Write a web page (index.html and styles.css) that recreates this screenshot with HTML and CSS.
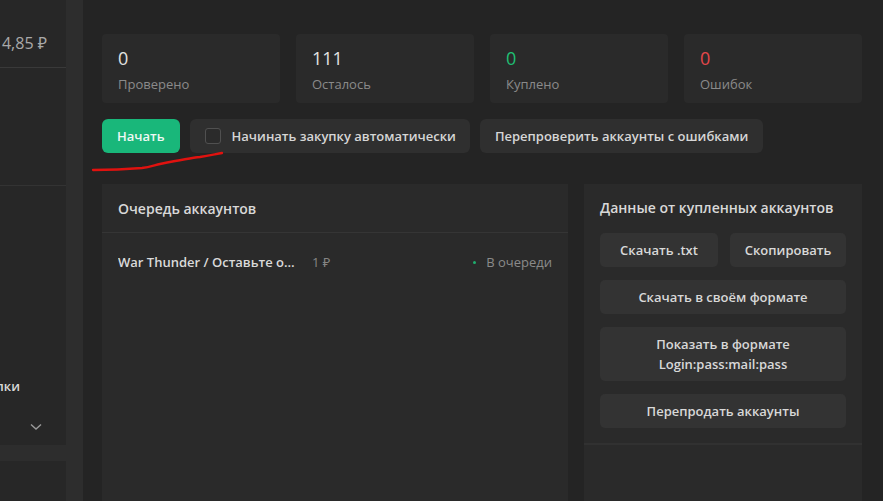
FILE: index.html
```html
<!DOCTYPE html>
<html>
<head>
    <title>Закупка аккаунтов</title>
    <link rel="stylesheet" href="styles.css">
</head>
<body>
    <div class="sidebar">
        <div class="side-card">
            <div class="side-inner">
                <div class="balance">
                    <span class="balance-label">Баланс</span>
                    <span class="balance-value">4,85 ₽</span>
                </div>
                <div class="side-block"></div>
                <div class="side-label">Режим закупки</div>
                <div class="side-select">
                    <svg width="12" height="8" viewBox="0 0 12 8"><path d="M1 1.5 L6 6 L11 1.5" fill="none" stroke="#9a9a9a" stroke-width="1.4"/></svg>
                </div>
            </div>
        </div>
        <div class="side-card side-card-bottom"></div>
    </div>

    <div class="main">
        <div class="stats">
            <div class="stat">
                <div class="stat-num">0</div>
                <div class="stat-label">Проверено</div>
            </div>
            <div class="stat">
                <div class="stat-num">111</div>
                <div class="stat-label">Осталось</div>
            </div>
            <div class="stat">
                <div class="stat-num green">0</div>
                <div class="stat-label">Куплено</div>
            </div>
            <div class="stat">
                <div class="stat-num red">0</div>
                <div class="stat-label">Ошибок</div>
            </div>
        </div>

        <div class="actions">
            <button class="btn btn-green">Начать</button>
            <label class="btn btn-check">
                <span class="checkbox"></span>
                Начинать закупку автоматически
            </label>
            <button class="btn">Перепроверить аккаунты с ошибками</button>
        </div>

        <div class="panels">
            <div class="panel queue">
                <div class="panel-head">Очередь аккаунтов</div>
                <div class="queue-row">
                    <span class="queue-title">War Thunder / Оставьте отзыв</span>
                    <span class="queue-price">1 ₽</span>
                    <span class="queue-status"><span class="dot"></span>В очереди</span>
                </div>
            </div>

            <div class="right-col">
                <div class="panel data">
                    <div class="data-title">Данные от купленных аккаунтов</div>
                    <div class="data-buttons">
                        <button class="btn-data">Скачать .txt</button>
                        <button class="btn-data">Скопировать</button>
                        <button class="btn-data wide">Скачать в своём формате</button>
                        <button class="btn-data wide">Показать в формате<br>Login:pass:mail:pass</button>
                        <button class="btn-data wide">Перепродать аккаунты</button>
                    </div>
                </div>
                <div class="panel data-bottom"></div>
            </div>
        </div>
    </div>

    <!-- red hand-drawn mark over the screenshot -->
    <svg class="mark" width="883" height="501" viewBox="0 0 883 501">
        <path d="M93 170 C110 170 130 169 142 168 C150 167 155 165 160 164 C175 161 190 158 200 157 C210 155 217 154 222 153" fill="none" stroke="#e0120f" stroke-width="2.3" stroke-linecap="round"/>
    </svg>
</body>
</html>
```

FILE: styles.css
```css
body {
    margin: 0;
    height: 501px;
    overflow: hidden;
    display: flex;
    background-color: #2d2d2d;
    font-family: "Open Sans", "Noto Sans", sans-serif;
    color: #dcdcdc;
}
.sidebar {
    width: 66px;
    flex-shrink: 0;
    display: flex;
    flex-direction: column;
    gap: 16px;
}
.side-card {
    background-color: #272727;
    height: 445px;
    display: flex;
    justify-content: flex-end;
    overflow: hidden;
}
.side-card-bottom {
    flex: 1;
}
.side-inner {
    width: 240px;
    flex-shrink: 0;
}
.balance {
    height: 68px;
    box-sizing: border-box;
    border-bottom: 1px solid #393939;
    display: flex;
    align-items: flex-end;
    justify-content: space-between;
    padding: 0 19px 13px 16px;
    font-size: 16px;
    line-height: 22px;
    color: #a9a9a9;
}
.balance-label {
    color: #888;
}
.side-block {
    height: 117px;
    border-bottom: 1px solid #333;
}
.side-label {
    margin-top: 191px;
    padding-right: 46px;
    text-align: right;
    font-size: 13px;
    font-weight: 600;
    color: #d8d8d8;
    line-height: 18px;
}
.side-select {
    margin-top: 20px;
    height: 24px;
    display: flex;
    align-items: center;
    justify-content: flex-end;
    padding-right: 24px;
}
.main {
    flex: 1;
    margin-left: 17px;
    background-color: #242424;
    padding: 34px 21px 0 19px;
    display: flex;
    flex-direction: column;
}
.stats {
    display: grid;
    grid-template-columns: repeat(4, 1fr);
    gap: 16px;
}
.stat {
    background-color: #2a2a2a;
    border-radius: 4px;
    height: 69px;
    box-sizing: border-box;
    padding: 12px 16px 0 16px;
}
.stat-num {
    font-size: 18px;
    line-height: 24px;
    color: #e2e2e2;
}
.stat-num.green {
    color: #1fbf73;
}
.stat-num.red {
    color: #e4474b;
}
.stat-label {
    margin-top: 5px;
    font-size: 13px;
    line-height: 18px;
    color: #8a8a8a;
}
.actions {
    margin-top: 16px;
    display: flex;
    gap: 10px;
}
.btn {
    height: 34px;
    box-sizing: border-box;
    padding: 0 15px;
    border: none;
    border-radius: 6px;
    background-color: #2f2f2f;
    color: #d6d6d6;
    font-family: "Open Sans", "Noto Sans", sans-serif;
    font-size: 13px;
    font-weight: 600;
    display: flex;
    align-items: center;
    cursor: pointer;
}
.btn-green {
    background-color: #19b77a;
    color: #eef8f3;
}
.btn-check {
    gap: 11px;
    padding-right: 14px;
}
.checkbox {
    width: 14px;
    height: 14px;
    border: 1px solid #505050;
    border-radius: 3px;
    background-color: #2b2b2b;
}
.panels {
    margin-top: 31px;
    flex: 1;
    display: grid;
    grid-template-columns: 1fr 278px;
    gap: 16px;
}
.panel {
    background-color: #2a2a2a;
}
.panel-head {
    height: 49px;
    box-sizing: border-box;
    border-bottom: 1px solid #353535;
    display: flex;
    align-items: center;
    padding: 0 16px;
    font-size: 14px;
    font-weight: 600;
    color: #d8d8d8;
}
.queue-row {
    height: 58px;
    display: flex;
    align-items: center;
    padding: 0 16px;
    font-size: 13px;
}
.queue-title {
    width: 180px;
    white-space: nowrap;
    overflow: hidden;
    text-overflow: ellipsis;
    font-weight: 600;
    color: #dadada;
}
.queue-price {
    margin-left: 14px;
    color: #858585;
}
.queue-status {
    margin-left: auto;
    display: flex;
    align-items: center;
    gap: 10px;
    color: #8a8a8a;
}
.dot {
    width: 3px;
    height: 3px;
    border-radius: 50%;
    background-color: #1fae6e;
}
.right-col {
    display: flex;
    flex-direction: column;
}
.data {
    padding: 14px 16px 15px 16px;
}
.data-title {
    font-size: 14px;
    font-weight: 600;
    line-height: 20px;
    color: #d8d8d8;
}
.data-buttons {
    margin-top: 15px;
    display: grid;
    grid-template-columns: 118px 116px;
    justify-content: space-between;
    row-gap: 13px;
}
.btn-data {
    border: none;
    border-radius: 5px;
    background-color: #333333;
    color: #d8d8d8;
    font-family: "Open Sans", "Noto Sans", sans-serif;
    font-size: 13px;
    font-weight: 600;
    line-height: 20px;
    padding: 7px 8px;
    cursor: pointer;
}
.btn-data.wide {
    grid-column: 1 / 3;
}
.data-bottom {
    flex: 1;
    border-top: 2px solid #313131;
}
.mark {
    position: absolute;
    left: 0;
    top: 0;
    pointer-events: none;
}
```
